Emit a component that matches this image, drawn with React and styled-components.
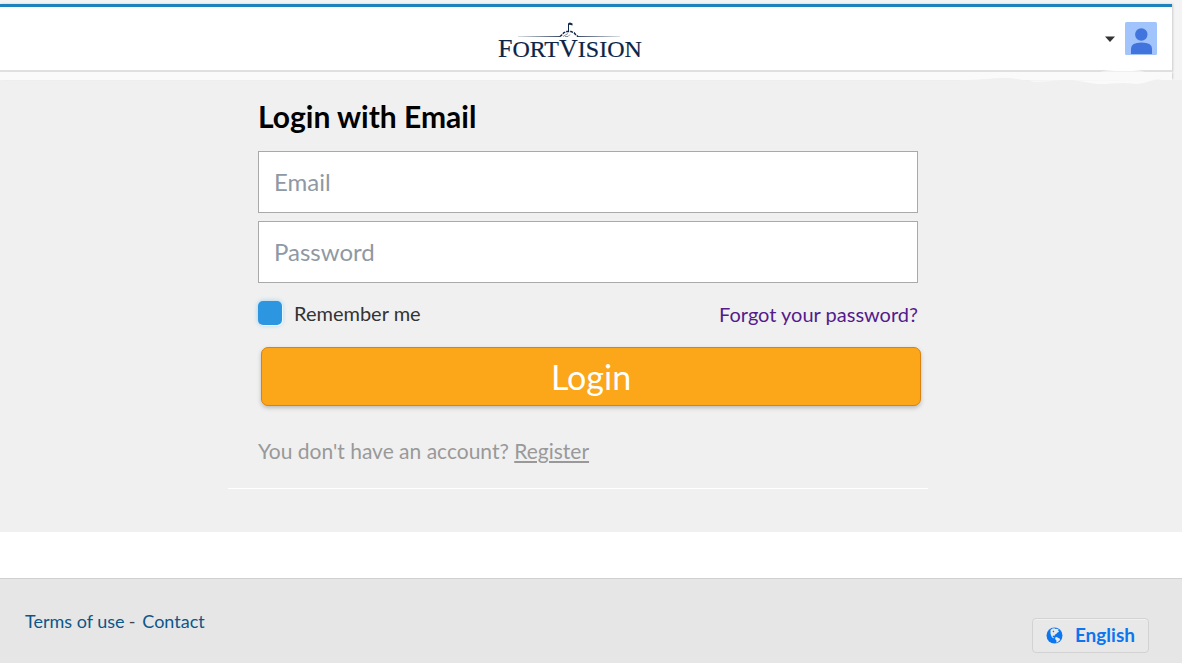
import React from "react";
import styled, { createGlobalStyle } from "styled-components";

const GlobalStyle = createGlobalStyle`
  * { box-sizing: border-box; }
  body {
    margin: 0;
    background: #fff;
    font-family: Lato, "Liberation Sans", sans-serif;
  }
`;

const TopArea = styled.div`
  position: relative;
  padding: 4px 10px 0 0;
  background: #f4f4f4;
`;

const Header = styled.header`
  display: grid;
  grid-template-columns: 1fr auto 1fr;
  align-items: center;
  height: 68px;
  padding: 0 15px 0 0;
  background: #fff;
  border-top: 3px solid #1f82bd;
  border-bottom: 2px solid #e0e0e0;
  box-shadow: 1px 0 2px #ccc;

  &::before { content: ""; }
`;

const HeaderStrip = styled.div`
  height: 8px;
  background: #fafafa;
  box-shadow: 2px 0 2px -1px #ccc;
`;

const LogoLink = styled.a`
  display: block;
  height: 48px;
  margin: 4px 14px 0 0;
`;

const AccountButton = styled.button`
  display: flex;
  align-items: center;
  justify-self: end;
  gap: 10px;
  padding: 0;
  border: 0;
  background: none;
  cursor: pointer;
`;

const TornEdge = styled.svg`
  position: absolute;
  right: 0;
  bottom: -6px;
`;

const LoginSection = styled.main`
  display: flex;
  justify-content: center;
  padding: 16px 26px 43px 0;
  background: #f0f0f0;
`;

const Form = styled.form`
  width: 700px;
  max-width: 100%;
  padding: 0 10px 22px 30px;
  border-bottom: 1px solid #fff;
`;

const Title = styled.h1`
  margin: 0 0 15px;
  font-size: 30px;
  line-height: 40px;
  font-weight: 700;
  color: #000;
`;

const TextField = styled.input`
  display: block;
  width: 100%;
  height: 62px;
  margin-bottom: 8px;
  padding: 0 15px 2px;
  border: 1px solid #a9a9a9;
  border-radius: 0;
  background: #fff;
  font: 24px Lato, "Liberation Sans", sans-serif;
  color: #333;

  &::placeholder { color: #8e99a4; opacity: 1; }
`;

const OptionsRow = styled.div`
  display: flex;
  justify-content: space-between;
  align-items: center;
  height: 44px;
  margin: 8px 0 12px;
`;

const RememberLabel = styled.label`
  display: flex;
  align-items: center;
  gap: 12px;
  font-size: 20px;
  line-height: 22px;
  color: #333;
`;

const Checkbox = styled.input`
  appearance: none;
  width: 24px;
  height: 24px;
  margin: 0;
  border-radius: 5px;
  background: #2d96e0;
  box-shadow: 1px 1px 0 #e8f6ff, 0 0 5px #9ccdea;
`;

const ForgotLink = styled.a`
  padding-top: 2px;
  font-size: 20px;
  line-height: 24px;
  color: #551a8b;
  text-decoration: none;
`;

const LoginButton = styled.button`
  display: block;
  width: 100%;
  height: 59px;
  margin: 0 0 0 3px;
  padding: 0;
  border: 1px solid #d9820f;
  border-radius: 7px;
  background: #fca61a;
  box-shadow: 0 2px 4px #bbb;
  font: 34px Lato, "Liberation Sans", sans-serif;
  color: #fff;
  cursor: pointer;
`;

const RegisterText = styled.p`
  margin: 30px 0 0;
  font-size: 21px;
  line-height: 30px;
  color: #999;

  a { color: inherit; }
`;

const Footer = styled.footer`
  display: flex;
  justify-content: space-between;
  align-items: flex-start;
  min-height: 85px;
  margin-top: 46px;
  padding: 30px 33px 10px 25px;
  border-top: 1px solid #d0d0d0;
  background: #e6e6e6;
`;

const FooterLinks = styled.nav`
  display: flex;
  gap: 4px;
  font-size: 18px;
  line-height: 24px;
  color: #444;

  a { color: #0d5689; text-decoration: none; }
  a:last-child { margin-left: 3px; }
`;

const LanguageButton = styled.button`
  display: flex;
  align-items: center;
  gap: 12px;
  height: 35px;
  margin-top: 9px;
  padding: 0 13px 2px;
  border: 1px solid #d2d2d2;
  border-radius: 4px;
  background: #e8e8e8;
  box-shadow: inset 0 1px 0 #f2f2f2;
  font: 700 19px Lato, "Liberation Sans", sans-serif;
  color: #0b76ef;
  cursor: pointer;

  svg { margin-top: 2px; }
`;

const LogoText = styled.text`
  font-family: "Liberation Serif", serif;
  font-size: 24px;
  fill: #0d2547;
  stroke: #0d2547;
  stroke-width: 0.2px;
`;

function Logo() {
  return (
    <svg width="148" height="48" viewBox="0 0 148 48" role="img" aria-label="FortVision">
      <defs>
        <linearGradient id="wall" gradientUnits="userSpaceOnUse" x1="20" y1="0" x2="122" y2="0">
          <stop offset="0" stopColor="#0d2547" stopOpacity="0.15" />
          <stop offset="0.4" stopColor="#0d2547" stopOpacity="0.8" />
          <stop offset="0.6" stopColor="#0d2547" stopOpacity="0.8" />
          <stop offset="1" stopColor="#0d2547" stopOpacity="0.15" />
        </linearGradient>
      </defs>
      <rect x="20" y="19" width="42" height="1" fill="url(#wall)" />
      <rect x="79" y="19" width="43" height="1" fill="url(#wall)" />
      <path d="M62 19.5l2-1.800 2-2.200 3-1h4l3 1.200 2 2.300 2 1.500" fill="none" stroke="#0d2547" strokeWidth="1.4" strokeDasharray="3 1" />
      <path d="M65 19.500l5-3M67 19.500h3l2-2" fill="none" stroke="#0d2547" strokeOpacity="0.5" />
      <path d="M70.500 14.500V6.500" stroke="#0d2547" strokeWidth="1" />
      <path d="M70.500 6l1.500-.4 2.500 1v2l-2.500-.8-1.500 .2z" fill="#0d2547" />
      <LogoText x="0" y="40">
        <tspan fontSize="26">F</tspan>ORT<tspan fontSize="26">V</tspan>ISION
      </LogoText>
    </svg>
  );
}

function Avatar() {
  return (
    <svg width="32" height="33" viewBox="0 0 32 33" aria-hidden="true">
      <rect width="32" height="33" rx="1.500" fill="#a1c4fd" />
      <circle cx="16.300" cy="12.500" r="6.200" fill="#4274dd" />
      <path d="M6 32v-5.500q0-6 10.500-6T27 26.500V32z" fill="#4274dd" />
    </svg>
  );
}

function Globe() {
  return (
    <svg width="17" height="17" viewBox="0 0 17 17" aria-hidden="true">
      <circle cx="8.500" cy="8.500" r="8" fill="currentColor" />
      <path
        d="M4.500 3L6.500 1.600l2-.3 1 .8 1.800-.4 1.700 1.300-1.200.6 1.400 1.200-1.700.6-1.300 1.500-1.200.6-.6 1.400-1.300-.5-.6.800.8 1.100 1.300.7-.7.3-1.800-.9-1-1.800-.6-2.200z"
        fill="#e8e8e8"
      />
      <path d="M9.200 10.500l1.500-.4 1.800 1 1.700.8-.6 1.600-1.800 1.500-1.500.7.2-2.200-1.300-1.300z" fill="#e8e8e8" />
      <path d="M6.500 4.200l1.200-.6.600.9-1 .9z" fill="currentColor" />
    </svg>
  );
}

export default function App() {
  return (
    <>
      <GlobalStyle />
      <TopArea>
        <Header>
          <LogoLink href="#home"><Logo /></LogoLink>
          <AccountButton type="button" aria-label="Account menu">
            <svg width="10" height="6" viewBox="0 0 10 6" aria-hidden="true">
              <path d="M0 .500h10L5 6z" fill="#333" />
            </svg>
            <Avatar />
          </AccountButton>
        </Header>
        <HeaderStrip />
        <TornEdge width="222" height="16" viewBox="0 0 222 16" aria-hidden="true">
          <path d="M140 1.500Q165-2 185 1.500z" fill="#fff" />
          <path d="M0 10C25 10 30 8 45 8S65 12 80 12 105 9 120 12s20 2 35 1 18 1 27-1 15-3 20-2l20 1v5H0z" fill="#f0f0f0" />
          <path d="M68 10.500C74 12 76 12 84 11.500s24-1.500 34-.500 15 3 23 3 20-2 31-.500 16-2.500 22-3.500z" fill="#fafafa" />
        </TornEdge>
      </TopArea>
      <LoginSection>
        <Form onSubmit={(e) => e.preventDefault()}>
          <Title>Login with Email</Title>
          <TextField type="email" placeholder="Email" aria-label="Email" />
          <TextField type="password" placeholder="Password" aria-label="Password" />
          <OptionsRow>
            <RememberLabel>
              <Checkbox type="checkbox" defaultChecked />
              Remember me
            </RememberLabel>
            <ForgotLink href="#forgot">Forgot your password?</ForgotLink>
          </OptionsRow>
          <LoginButton type="submit">Login</LoginButton>
          <RegisterText>
            You don't have an account? <a href="#register">Register</a>
          </RegisterText>
        </Form>
      </LoginSection>
      <Footer>
        <FooterLinks>
          <a href="#terms">Terms of use</a>
          <span>-</span>
          <a href="#contact">Contact</a>
        </FooterLinks>
        <LanguageButton type="button">
          <Globe />
          English
        </LanguageButton>
      </Footer>
    </>
  );
}
